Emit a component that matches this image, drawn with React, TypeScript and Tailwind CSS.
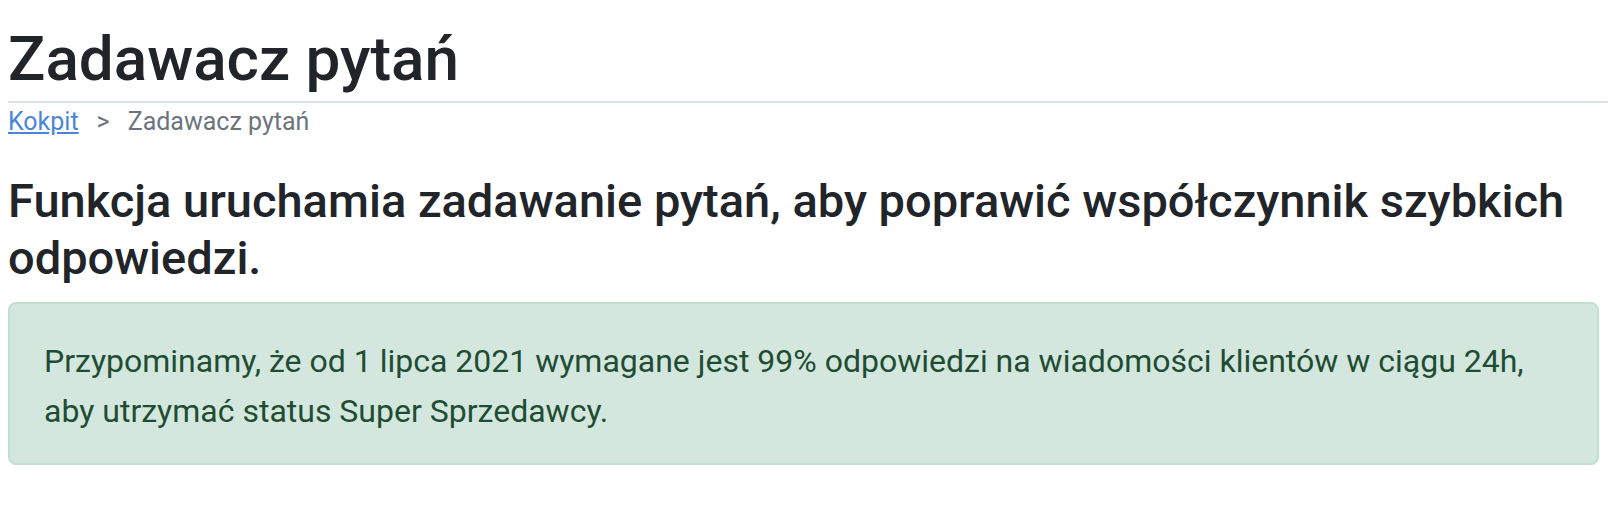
export default function App() {
  return (
    <div className="min-h-screen bg-white px-2 pt-[22px] text-[#212529]" style={{ fontFamily: 'Roboto, "Noto Sans", sans-serif' }}>
      <h1 className="text-[62px] font-medium leading-[1.2]">Zadawacz pytań</h1>
      <div className="mt-[5px] border-t-2 border-[#dee2e6]" />
      <nav className="mt-[4px] flex items-center gap-[18px] text-[25px] leading-[1.2]">
        <a href="#" className="text-[#4a86d8] underline">Kokpit</a>
        <span className="text-[#6c757d]">&gt;</span>
        <span className="text-[#6c757d]">Zadawacz pytań</span>
      </nav>
      <h3 className="mt-9 text-[47px] font-medium leading-[1.2]">
        Funkcja uruchamia zadawanie pytań, aby poprawić współczynnik szybkich odpowiedzi.
      </h3>
      <div className="mt-4 mr-[9px] rounded-lg border-2 border-[#c3dfd0] bg-[#d4e7de] pl-[34px] pr-[44px] pt-[33px] pb-[27px] text-[32px] leading-[1.55] text-[#1f4d33]">
        Przypominamy, że od 1 lipca 2021 wymagane jest 99% odpowiedzi na wiadomości klientów w ciągu 24h, aby utrzymać status Super Sprzedawcy.
      </div>
    </div>
  );
}
